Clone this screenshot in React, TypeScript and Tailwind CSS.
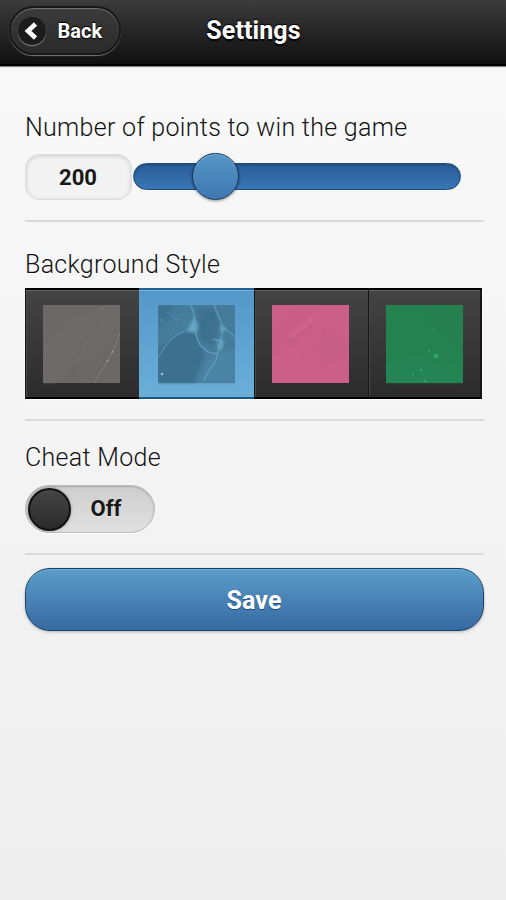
import React, { useState } from "react";

interface SwatchType {
  id: string;
  art: React.ReactNode;
}

const swatches: SwatchType[] = [
  {
    id: "stone",
    art: (
      <>
        <rect width="77" height="78" fill="#6b6867" />
        <g filter="url(#soft)">
          <path d="M0 40 L30 14 L64 0 H77 V30 L50 50 L10 78 H0Z" fill="#716d6c" opacity="0.6" />
          <path d="M28 78 C30 56 36 40 46 26 S58 8 62 0" fill="none" stroke="#625f5e" strokeWidth="5" opacity="0.2" />
        </g>
        <path d="M77 28 L70 46 L62 60 L51 78" fill="none" stroke="#87827f" strokeWidth="1" opacity="0.8" />
        <path d="M57 5 L60 2" fill="none" stroke="#8a8683" strokeWidth="1" />
        <path d="M69 47.5 L70 46 M64 56.5 L65 55" fill="none" stroke="#aaa6a3" strokeWidth="1.5" />
      </>
    ),
  },
  {
    id: "water",
    art: (
      <>
        <rect width="77" height="78" fill="#457b9b" />
        <g filter="url(#soft)">
          <path d="M0 44 L20 30 L36 26 L46 48 L36 78 H0Z" fill="#3b6f8e" />
          <path d="M0 0 H16 L10 14 L0 20Z" fill="#3d7190" />
          <path d="M40 4 H58 L62 20 L56 40 L42 36Z" fill="#3c6e8f" opacity="0.8" />
          <path d="M38 78 L52 50 L77 44 V78Z" fill="#4d86a8" opacity="0.7" />
          <path d="M36 12 L40 22 L37 28 L29 26Z M62 32 L66 37 L63 46 L59 43Z M62 20 L68 24 L63 29Z" fill="#6fb2d2" opacity="0.8" />
        </g>
        <g fill="none" stroke="#62a0c0" strokeLinecap="round" filter="url(#thin)">
          <path d="M33 0 L36 10 L38 22 L38 30 L42 40 L50 47 L60 49" strokeWidth="1.6" opacity="0.8" />
          <path d="M37 22 L28 25 L18 30 L8 40 L1 51" strokeWidth="1.2" opacity="0.6" />
          <path d="M8 6 L18 14 L24 15 L36 23" strokeWidth="1.2" opacity="0.3" />
          <path d="M56 0 L60 10 L65 22 L63 36 L60 46 L58 56 L52 64 L46 75" strokeWidth="1.6" opacity="0.7" />
          <path d="M65 22 L77 32 M62 36 L55 34" strokeWidth="1.4" opacity="0.8" />
        </g>
        <circle cx="4" cy="69" r="1.3" fill="#8bc4dc" />
        <circle cx="4" cy="15" r="1" fill="#75b2d0" opacity="0.7" />
      </>
    ),
  },
  {
    id: "rose",
    art: (
      <>
        <rect width="77" height="78" fill="#cb5f87" />
        <g filter="url(#soft)">
          <path d="M24 0 L48 0 L20 38 L0 50 V28Z" fill="#c5587f" opacity="0.3" />
          <path d="M50 16 L70 36 L66 60 L48 50Z" fill="#bd5b80" opacity="0.3" />
          <path d="M42 12 L34 20 L24 27 L19 33" fill="none" stroke="#d96f96" strokeWidth="3" opacity="0.6" />
          <path d="M44 15 L35 24 L26 31 L18 38" fill="none" stroke="#b4557a" strokeWidth="2.5" opacity="0.5" />
          <path d="M30 51 L46 40 M68 48 L77 38 M50 66 L54 57" fill="none" stroke="#b6577a" strokeWidth="2.5" opacity="0.4" />
        </g>
      </>
    ),
  },
  {
    id: "felt",
    art: (
      <>
        <rect width="77" height="78" fill="#238250" />
        <g filter="url(#soft)">
          <path d="M0 58 L28 50 L58 62 L77 50 V78 H0Z" fill="#24885a" opacity="0.4" />
          <path d="M36 0 H77 V48 L54 32Z" fill="#2b7d4b" opacity="0.4" />
        </g>
        <g fill="#2ba66b" filter="url(#thin)">
          <path d="M50 48 L53 51 L51 54 L47 51Z" />
          <circle cx="43" cy="46" r="1" />
          <circle cx="35" cy="65" r="1.2" />
          <circle cx="27" cy="70" r="1.2" opacity="0.7" />
          <circle cx="39" cy="76" r="1.2" />
          <circle cx="48" cy="24" r="1" opacity="0.6" />
        </g>
      </>
    ),
  },
];

function Header() {
  return (
    <header className="grid h-[66px] grid-cols-[1fr_auto_1fr] items-start border-b-2 border-black bg-linear-to-b from-[#3c3c3c] to-[#111] px-[9px] pt-[6px] shadow-[0_1px_1px_#888]">
      <button className="flex h-[49px] w-[112px] items-center rounded-full border-2 border-[#181818] bg-linear-to-b from-[#3b3b3b] to-[#2b2b2b] pl-[7px] shadow-[0_1px_1px_#777,inset_0_1px_1px_#777]">
        <span className="flex size-[28px] items-center justify-center rounded-full bg-[#1c1c1c] shadow-[0_1px_1px_#888]">
          <svg width="28" height="28" viewBox="0 0 28 28" fill="none">
            <path d="M17.5 7 L10 14 L17.5 21" stroke="#fff" strokeWidth="4.6" />
          </svg>
        </span>
        <span className="ml-[11.5px] text-[20px] font-bold text-white [text-shadow:0_-1px_1px_#000,0_1px_1px_#000]">
          Back
        </span>
      </button>
      <h1 className="mt-[7px] pl-px text-[25px] leading-[36px] font-bold tracking-[0.1px] text-white [text-shadow:0_-1px_1px_#000,0_2px_1px_#000]">
        Settings
      </h1>
    </header>
  );
}

function Label(props: { text: string }) {
  return (
    <div className="h-[30px] text-[25px] leading-[30px] font-light tracking-[0.3px] whitespace-nowrap text-[#111] [text-shadow:0_1px_0_#fff]">
      {props.text}
    </div>
  );
}

function Divider() {
  return <div className="h-[2px] bg-[#dadada]" />;
}

function App() {
  const [points] = useState(200);
  const [style, setStyle] = useState("water");
  const [cheat, setCheat] = useState(false);

  return (
    <div className="h-[900px] w-[506px] overflow-hidden bg-linear-to-b from-[#f9f9f9] to-[#eee] font-['Roboto','Liberation_Sans',sans-serif]">
      {/* blur filters used by the texture swatches */}
      <svg className="absolute size-0">
        <filter id="soft">
          <feGaussianBlur stdDeviation="1.4" />
        </filter>
        <filter id="thin">
          <feGaussianBlur stdDeviation="0.6" />
        </filter>
      </svg>
      <Header />
      <main className="pr-[22px] pl-[25px] pt-[47px]">
        <Label text="Number of points to win the game" />
        <div className="mt-[11px] mb-[20px] flex h-[46px] items-center">
          <div className="flex h-[46px] w-[107px] items-center justify-center rounded-[14px] border border-[#ddd] bg-[#f2f2f2] pr-px text-[22px] font-bold text-[#181818] shadow-[inset_0_1px_4px_#ccc]">
            {points}
          </div>
          <div className="mb-[1px] ml-[0.5px] flex h-[27px] w-[328px] items-center rounded-full border border-[#1f4c78] bg-linear-to-b from-[#285c97] to-[#3a76b6] pl-[58px] shadow-[inset_0_1px_2px_#1d4a7c]">
            <div className="size-[47px] shrink-0 rounded-full border-[1.5px] border-[#10355c] bg-linear-to-b from-[#5695c5] to-[#3f78b1] shadow-[0_1px_3px_#0006,inset_0_1px_0_#80b5da]" />
          </div>
        </div>
        <Divider />

        <div className="h-[28px]" />
        <Label text="Background Style" />
        <div className="mt-[8px] mb-[20px] grid h-[111px] w-[457px] grid-cols-4 shadow-[0_1px_1px_#fff]">
          {swatches.map((s) => (
            <button
              key={s.id}
              onClick={() => setStyle(s.id)}
              className={
                style === s.id
                  ? "border-y-2 border-t-[#256090] border-b-[#175887] bg-linear-to-b from-[#5498cb] to-[#6aaed8] pt-[15px] pl-[19px] shadow-[inset_0_1px_0_#73b5df]"
                  : "border-y-2 border-l border-y-black border-l-[#151515] bg-linear-to-b from-[#444] to-[#2c2c2c] pt-[15px] pl-[17px] shadow-[inset_0_1px_0_#666,inset_1px_0_0_#484848] last:border-r-2 last:border-r-[#151515]"
              }
            >
              <svg className="block h-full" width="77" height="78" viewBox="0 0 77 78" preserveAspectRatio="xMinYMin">
                {s.art}
              </svg>
            </button>
          ))}
        </div>
        <Divider />

        <div className="h-[22px]" />
        <Label text="Cheat Mode" />
        <button
          onClick={() => setCheat(!cheat)}
          className="mt-[12px] mb-[20px] flex h-[48px] w-[130px] items-center rounded-full border border-[#bbb] bg-linear-to-b from-[#cecece] to-[#e0e0e0] pl-[1.5px] shadow-[inset_0_1px_2px_#aaa,0_1px_0_#fff]"
        >
          <span className="size-[43px] rounded-full border-2 border-[#111] bg-linear-to-b from-[#454545] to-[#2b2b2b] shadow-[0_0_3px_#888]" />
          <span className="mb-[2px] ml-[20px] text-[22px] font-bold text-[#181818] [text-shadow:0_1px_0_#eee]">
            {cheat ? "On" : "Off"}
          </span>
        </button>
        <Divider />

        <button className="mt-[13px] h-[63px] w-full rounded-[25px] border-[1.5px] border-[#154167] bg-linear-to-b from-[#5c9dc9] to-[#3769a2] pt-[2px] pr-px text-[25px] font-bold tracking-[0.1px] text-white shadow-[0_1px_3px_#0004,inset_0_1px_0_#72aed4] [text-shadow:0_1px_1px_#194b7e]">
          Save
        </button>
      </main>
    </div>
  );
}

export default App;
